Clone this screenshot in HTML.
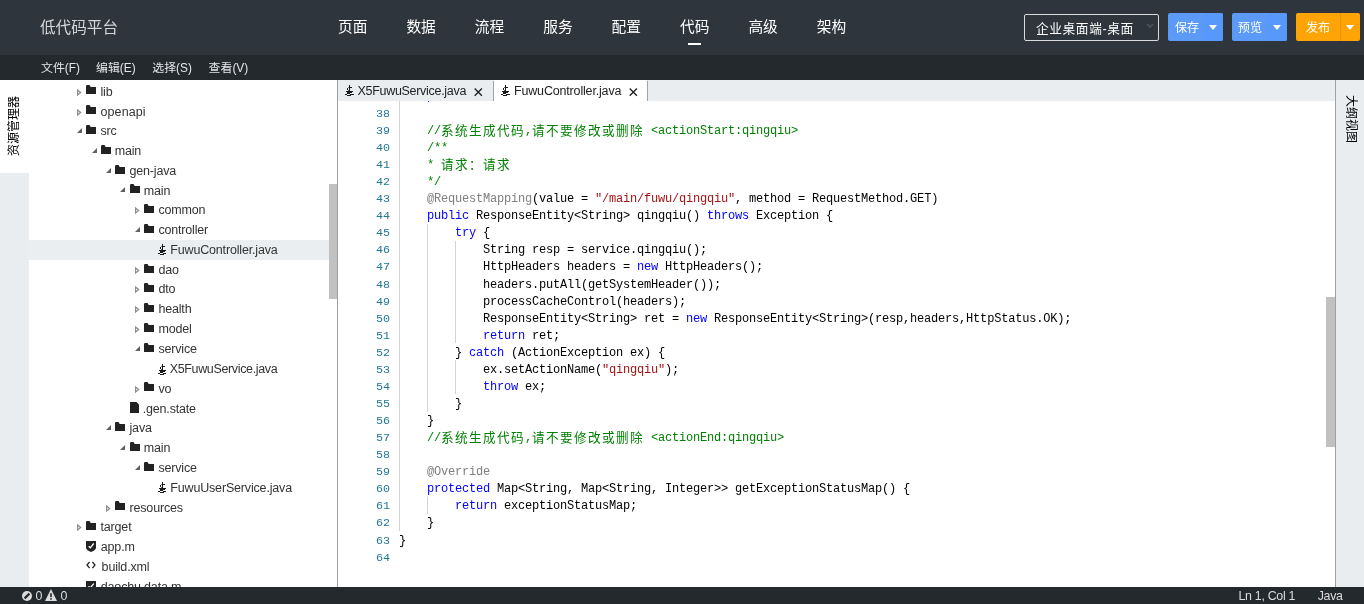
<!DOCTYPE html>
<html lang="zh-CN">
<head>
<meta charset="utf-8">
<title>低代码平台</title>
<style>
*{box-sizing:border-box;margin:0;padding:0}
html,body{width:1364px;height:604px;overflow:hidden;background:#fff}
body{position:relative;font-family:"Liberation Sans","Noto Sans CJK SC",sans-serif;font-size:12.6px;color:#333}
i{font-style:normal;display:block;position:absolute}
#top{position:absolute;left:0;top:0;width:1364px;height:55px;background:#2e353d}
#title{position:absolute;left:40px;top:17px;font-size:15.6px;line-height:22px;color:#d4d6d8;white-space:nowrap}
.nav{position:absolute;top:16px;font-size:14.7px;line-height:22px;color:#fff;white-space:nowrap}
#ul{position:absolute;left:688px;top:43px;width:13px;height:2px;background:#fff}
#sel{position:absolute;left:1024px;top:14px;width:135px;height:27px;border:1px solid #d8dadc;border-radius:2px}
#sel span{position:absolute;left:11px;top:4px;font-size:12.7px;letter-spacing:.6px;line-height:20px;color:#fff;white-space:nowrap}
#sel svg{position:absolute;left:120.5px;top:8px}
.btn{position:absolute;top:13px;height:28px;border-radius:2px;color:#fff;font-size:12.1px;line-height:28px;white-space:nowrap;overflow:hidden}
.btn span{position:absolute;left:7px;top:1px}
.btn b{position:absolute;top:12px;width:0;height:0;border-left:4.5px solid transparent;border-right:4.5px solid transparent;border-top:5px solid #fff}
.blue{background:#5b9bf7}
.orange{background:#ffa406}
.btn u{position:absolute;left:36px;top:0;width:19px;height:28px;background:#5699fa;text-decoration:none}
#menu{position:absolute;left:0;top:55px;width:1364px;height:25px;background:#24292e}
#menu span{position:absolute;top:4px;font-size:11.9px;line-height:18px;color:#e4e5e6;white-space:nowrap}
#lstrip{position:absolute;left:0;top:80px;width:29px;height:507px;background:#e9edf0}
#ltab{position:absolute;left:0;top:0;width:29px;height:93px;background:#fff}
.vt{position:absolute;white-space:nowrap;font-size:12px;line-height:14px;color:#000;transform-origin:50% 50%}
#vt1{left:14px;top:46px;transform:translate(-50%,-50%) rotate(-90deg)}
#vt2{left:15px;top:39.3px;transform:translate(-50%,-50%) rotate(90deg)}
#tree{position:absolute;left:29px;top:80px;width:308px;height:507px;background:#fff;overflow:hidden}
.row{position:absolute;left:0;width:300px;height:19.8px}
.selbg{position:absolute;left:0;top:160px;width:300px;height:19.8px;background:#ebeef1}
.lb{position:absolute;line-height:16px;font-size:12.5px;letter-spacing:-0.17px;color:#333;white-space:nowrap}
svg.ic,svg.ar{position:absolute;display:block}
#tsb{position:absolute;left:329px;top:184px;width:8px;height:115px;background:#c1c1c1}
#vline{position:absolute;left:337px;top:80px;width:1px;height:507px;background:#a0a0a0}
#tabs{position:absolute;left:338px;top:80px;width:997px;height:21px;background:#e9edf0}
.tab{position:absolute;top:0;height:21px;font-size:12.5px;letter-spacing:-0.3px;line-height:21px;color:#222;white-space:nowrap}
.tab span{position:absolute;top:1px}
#ed{position:absolute;left:338px;top:101px;width:997px;height:486px;background:#fff;overflow:hidden}
#code{position:absolute;left:0;top:0;width:997px;height:486px;font-family:"Liberation Mono","Noto Sans CJK SC",monospace;font-size:12px;letter-spacing:-0.2px}
.ln{position:absolute;left:0;height:17px;line-height:17px;white-space:pre;width:997px}
.no{position:absolute;top:0;left:0;width:52px;text-align:right;color:#237893;font-size:11.7px;letter-spacing:0}
.tx{position:absolute;top:0;left:61px;color:#000}
.z{font-size:12.6px;letter-spacing:1.4px;position:relative;top:1px}
.c{color:#008000}.k{color:#0000ff}.s{color:#a31515}.a{color:#808080}
.g{position:absolute;width:1px;background:#d3d3d3}
#esb{position:absolute;left:988px;top:196px;width:9px;height:150px;background:#c1c1c1}
#rline{position:absolute;left:1335px;top:80px;width:1px;height:507px;background:#a0a0a0}
#rstrip{position:absolute;left:1336px;top:80px;width:28px;height:507px;background:#e9edf0}
#status{position:absolute;left:0;top:587px;width:1364px;height:17px;background:#24292e;color:#dcdcdc;font-size:12.4px;letter-spacing:-0.3px;line-height:17px}
#status span{position:absolute;top:1px;white-space:nowrap}
#top,#menu,#lstrip,#tree,#tabs,#ed,#rstrip,#status{will-change:transform}
</style>
</head>
<body>
<div id="top">
<div id="title">低代码平台</div>
<div class="nav" style="left:338px">页面</div>
<div class="nav" style="left:406.4px">数据</div>
<div class="nav" style="left:474.8px">流程</div>
<div class="nav" style="left:543.2px">服务</div>
<div class="nav" style="left:611.6px">配置</div>
<div class="nav" style="left:680px">代码</div>
<div class="nav" style="left:748.4px">高级</div>
<div class="nav" style="left:816.8px">架构</div>
<div id="ul"></div>
<div id="sel"><span>企业桌面端-桌面</span><svg width="8" height="6" viewBox="0 0 8 6"><path d="M1 1 L4 4 L7 1" fill="none" stroke="#4c535b" stroke-width="1.6"/></svg></div>
<div class="btn blue" style="left:1168px;width:55px"><u></u><span style="left:7px">保存</span><b style="left:40.7px"></b></div>
<div class="btn blue" style="left:1232px;width:55px"><u></u><span style="left:5.8px">预览</span><b style="left:40.7px"></b></div>
<div class="btn orange" style="left:1296px;width:64px"><span style="left:10px">发布</span><i style="left:44px;top:0;width:1px;height:28px;background:#e8940a"></i><b style="left:50px"></b></div>
</div>
<div id="menu"><span style="left:41px">文件(F)</span><span style="left:96px">编辑(E)</span><span style="left:152.3px">选择(S)</span><span style="left:208.6px">查看(V)</span></div>
<div id="lstrip"><div id="ltab"></div><div class="vt" id="vt1">资源管理器</div></div>
<div id="tree"><div class="selbg"></div><svg class="ar" style="left:48.0px;top:1px;margin-top:8px" width="5" height="8" viewBox="0 0 5 8"><path d="M.6 1L3.7 3.5L.6 6Z" fill="#f0f0f0" stroke="#8e8e8e" stroke-width="1.2"/></svg><svg class="ic" style="left:57.0px;top:1px;margin-top:4px" width="10" height="9" viewBox="0 0 10 9"><path d="M0 1.2Q0 0 1.2 0H3Q4 0 4.3 1.2L4.6 2H10V9H0Z" fill="#222"/></svg><span class="lb" style="left:71.5px;top:4px">lib</span><svg class="ar" style="left:48.0px;top:21px;margin-top:8px" width="5" height="8" viewBox="0 0 5 8"><path d="M.6 1L3.7 3.5L.6 6Z" fill="#f0f0f0" stroke="#8e8e8e" stroke-width="1.2"/></svg><svg class="ic" style="left:57.0px;top:21px;margin-top:4px" width="10" height="9" viewBox="0 0 10 9"><path d="M0 1.2Q0 0 1.2 0H3Q4 0 4.3 1.2L4.6 2H10V9H0Z" fill="#222"/></svg><span class="lb" style="left:71.5px;top:24px;letter-spacing:0.1px">openapi</span><svg class="ar" style="left:48.0px;top:41px;margin-top:6.8px" width="5" height="5" viewBox="0 0 5 5"><path d="M5 0V5H0Z" fill="#606060"/></svg><svg class="ic" style="left:57.0px;top:41px;margin-top:4px" width="10" height="9" viewBox="0 0 10 9"><path d="M0 1.2Q0 0 1.2 0H3Q4 0 4.3 1.2L4.6 2H10V9H0Z" fill="#222"/></svg><span class="lb" style="left:71.5px;top:43px">src</span><svg class="ar" style="left:63.0px;top:61px;margin-top:6.8px" width="5" height="5" viewBox="0 0 5 5"><path d="M5 0V5H0Z" fill="#606060"/></svg><svg class="ic" style="left:72.0px;top:61px;margin-top:4px" width="10" height="9" viewBox="0 0 10 9"><path d="M0 1.2Q0 0 1.2 0H3Q4 0 4.3 1.2L4.6 2H10V9H0Z" fill="#222"/></svg><span class="lb" style="left:85.7px;top:63px">main</span><svg class="ar" style="left:76.8px;top:81px;margin-top:6.8px" width="5" height="5" viewBox="0 0 5 5"><path d="M5 0V5H0Z" fill="#606060"/></svg><svg class="ic" style="left:85.9px;top:81px;margin-top:4px" width="10" height="9" viewBox="0 0 10 9"><path d="M0 1.2Q0 0 1.2 0H3Q4 0 4.3 1.2L4.6 2H10V9H0Z" fill="#222"/></svg><span class="lb" style="left:100.5px;top:83px">gen-java</span><svg class="ar" style="left:91.3px;top:100px;margin-top:6.8px" width="5" height="5" viewBox="0 0 5 5"><path d="M5 0V5H0Z" fill="#606060"/></svg><svg class="ic" style="left:100.9px;top:100px;margin-top:4px" width="10" height="9" viewBox="0 0 10 9"><path d="M0 1.2Q0 0 1.2 0H3Q4 0 4.3 1.2L4.6 2H10V9H0Z" fill="#222"/></svg><span class="lb" style="left:114.8px;top:103px">main</span><svg class="ar" style="left:105.7px;top:119px;margin-top:8px" width="5" height="8" viewBox="0 0 5 8"><path d="M.6 1L3.7 3.5L.6 6Z" fill="#f0f0f0" stroke="#8e8e8e" stroke-width="1.2"/></svg><svg class="ic" style="left:114.9px;top:120px;margin-top:4px" width="10" height="9" viewBox="0 0 10 9"><path d="M0 1.2Q0 0 1.2 0H3Q4 0 4.3 1.2L4.6 2H10V9H0Z" fill="#222"/></svg><span class="lb" style="left:129.4px;top:122px">common</span><svg class="ar" style="left:105.7px;top:140px;margin-top:6.8px" width="5" height="5" viewBox="0 0 5 5"><path d="M5 0V5H0Z" fill="#606060"/></svg><svg class="ic" style="left:114.9px;top:140px;margin-top:4px" width="10" height="9" viewBox="0 0 10 9"><path d="M0 1.2Q0 0 1.2 0H3Q4 0 4.3 1.2L4.6 2H10V9H0Z" fill="#222"/></svg><span class="lb" style="left:129.4px;top:142px">controller</span><svg class="ic" style="left:129.2px;top:160px;margin-top:4px" width="9" height="11" viewBox="0 0 9 11" shape-rendering="crispEdges"><g fill="#1a1a1a"><rect x="4" y="0" width="1" height="6"/><rect x="5" y="2" width="2" height="1"/><rect x="3" y="2" width="1" height="1" opacity=".6"/><rect x="2" y="3" width="1" height="2"/><rect x="3" y="5" width="1" height="1" opacity=".7"/><rect x="1" y="6" width="7" height="1"/><rect x="2" y="7" width="5" height="1"/><rect x="2" y="8" width="3" height="1"/><rect x="0" y="9" width="2" height="1"/><rect x="5" y="9" width="3" height="1"/><rect x="2" y="10" width="4" height="1"/></g></svg><span class="lb" style="left:141.3px;top:162px">FuwuController.java</span><svg class="ar" style="left:105.7px;top:179px;margin-top:8px" width="5" height="8" viewBox="0 0 5 8"><path d="M.6 1L3.7 3.5L.6 6Z" fill="#f0f0f0" stroke="#8e8e8e" stroke-width="1.2"/></svg><svg class="ic" style="left:114.9px;top:180px;margin-top:4px" width="10" height="9" viewBox="0 0 10 9"><path d="M0 1.2Q0 0 1.2 0H3Q4 0 4.3 1.2L4.6 2H10V9H0Z" fill="#222"/></svg><span class="lb" style="left:129.4px;top:182px">dao</span><svg class="ar" style="left:105.7px;top:198px;margin-top:8px" width="5" height="8" viewBox="0 0 5 8"><path d="M.6 1L3.7 3.5L.6 6Z" fill="#f0f0f0" stroke="#8e8e8e" stroke-width="1.2"/></svg><svg class="ic" style="left:114.9px;top:199px;margin-top:4px" width="10" height="9" viewBox="0 0 10 9"><path d="M0 1.2Q0 0 1.2 0H3Q4 0 4.3 1.2L4.6 2H10V9H0Z" fill="#222"/></svg><span class="lb" style="left:129.4px;top:201px">dto</span><svg class="ar" style="left:105.7px;top:218px;margin-top:8px" width="5" height="8" viewBox="0 0 5 8"><path d="M.6 1L3.7 3.5L.6 6Z" fill="#f0f0f0" stroke="#8e8e8e" stroke-width="1.2"/></svg><svg class="ic" style="left:114.9px;top:219px;margin-top:4px" width="10" height="9" viewBox="0 0 10 9"><path d="M0 1.2Q0 0 1.2 0H3Q4 0 4.3 1.2L4.6 2H10V9H0Z" fill="#222"/></svg><span class="lb" style="left:129.4px;top:221px">health</span><svg class="ar" style="left:105.7px;top:238px;margin-top:8px" width="5" height="8" viewBox="0 0 5 8"><path d="M.6 1L3.7 3.5L.6 6Z" fill="#f0f0f0" stroke="#8e8e8e" stroke-width="1.2"/></svg><svg class="ic" style="left:114.9px;top:239px;margin-top:4px" width="10" height="9" viewBox="0 0 10 9"><path d="M0 1.2Q0 0 1.2 0H3Q4 0 4.3 1.2L4.6 2H10V9H0Z" fill="#222"/></svg><span class="lb" style="left:129.4px;top:241px">model</span><svg class="ar" style="left:105.7px;top:259px;margin-top:6.8px" width="5" height="5" viewBox="0 0 5 5"><path d="M5 0V5H0Z" fill="#606060"/></svg><svg class="ic" style="left:114.9px;top:259px;margin-top:4px" width="10" height="9" viewBox="0 0 10 9"><path d="M0 1.2Q0 0 1.2 0H3Q4 0 4.3 1.2L4.6 2H10V9H0Z" fill="#222"/></svg><span class="lb" style="left:129.4px;top:261px">service</span><svg class="ic" style="left:129.2px;top:280px;margin-top:4px" width="9" height="11" viewBox="0 0 9 11" shape-rendering="crispEdges"><g fill="#1a1a1a"><rect x="4" y="0" width="1" height="6"/><rect x="5" y="2" width="2" height="1"/><rect x="3" y="2" width="1" height="1" opacity=".6"/><rect x="2" y="3" width="1" height="2"/><rect x="3" y="5" width="1" height="1" opacity=".7"/><rect x="1" y="6" width="7" height="1"/><rect x="2" y="7" width="5" height="1"/><rect x="2" y="8" width="3" height="1"/><rect x="0" y="9" width="2" height="1"/><rect x="5" y="9" width="3" height="1"/><rect x="2" y="10" width="4" height="1"/></g></svg><span class="lb" style="left:140.7px;top:281px;letter-spacing:-0.35px">X5FuwuService.java</span><svg class="ar" style="left:105.7px;top:298px;margin-top:8px" width="5" height="8" viewBox="0 0 5 8"><path d="M.6 1L3.7 3.5L.6 6Z" fill="#f0f0f0" stroke="#8e8e8e" stroke-width="1.2"/></svg><svg class="ic" style="left:114.9px;top:298px;margin-top:4px" width="10" height="9" viewBox="0 0 10 9"><path d="M0 1.2Q0 0 1.2 0H3Q4 0 4.3 1.2L4.6 2H10V9H0Z" fill="#222"/></svg><span class="lb" style="left:129.4px;top:301px">vo</span><svg class="ic" style="left:100.9px;top:318px;margin-top:4px" width="9" height="11" viewBox="0 0 9 11"><path d="M0 0H6.5L9 2.5V11H0Z" fill="#222"/></svg><span class="lb" style="left:113.7px;top:321px">.gen.state</span><svg class="ar" style="left:76.8px;top:338px;margin-top:6.8px" width="5" height="5" viewBox="0 0 5 5"><path d="M5 0V5H0Z" fill="#606060"/></svg><svg class="ic" style="left:85.9px;top:338px;margin-top:4px" width="10" height="9" viewBox="0 0 10 9"><path d="M0 1.2Q0 0 1.2 0H3Q4 0 4.3 1.2L4.6 2H10V9H0Z" fill="#222"/></svg><span class="lb" style="left:100.5px;top:340px">java</span><svg class="ar" style="left:91.3px;top:358px;margin-top:6.8px" width="5" height="5" viewBox="0 0 5 5"><path d="M5 0V5H0Z" fill="#606060"/></svg><svg class="ic" style="left:100.9px;top:358px;margin-top:4px" width="10" height="9" viewBox="0 0 10 9"><path d="M0 1.2Q0 0 1.2 0H3Q4 0 4.3 1.2L4.6 2H10V9H0Z" fill="#222"/></svg><span class="lb" style="left:114.8px;top:360px">main</span><svg class="ar" style="left:105.7px;top:378px;margin-top:6.8px" width="5" height="5" viewBox="0 0 5 5"><path d="M5 0V5H0Z" fill="#606060"/></svg><svg class="ic" style="left:114.9px;top:378px;margin-top:4px" width="10" height="9" viewBox="0 0 10 9"><path d="M0 1.2Q0 0 1.2 0H3Q4 0 4.3 1.2L4.6 2H10V9H0Z" fill="#222"/></svg><span class="lb" style="left:129.4px;top:380px">service</span><svg class="ic" style="left:129.2px;top:398px;margin-top:4px" width="9" height="11" viewBox="0 0 9 11" shape-rendering="crispEdges"><g fill="#1a1a1a"><rect x="4" y="0" width="1" height="6"/><rect x="5" y="2" width="2" height="1"/><rect x="3" y="2" width="1" height="1" opacity=".6"/><rect x="2" y="3" width="1" height="2"/><rect x="3" y="5" width="1" height="1" opacity=".7"/><rect x="1" y="6" width="7" height="1"/><rect x="2" y="7" width="5" height="1"/><rect x="2" y="8" width="3" height="1"/><rect x="0" y="9" width="2" height="1"/><rect x="5" y="9" width="3" height="1"/><rect x="2" y="10" width="4" height="1"/></g></svg><span class="lb" style="left:141.3px;top:400px">FuwuUserService.java</span><svg class="ar" style="left:76.8px;top:417px;margin-top:8px" width="5" height="8" viewBox="0 0 5 8"><path d="M.6 1L3.7 3.5L.6 6Z" fill="#f0f0f0" stroke="#8e8e8e" stroke-width="1.2"/></svg><svg class="ic" style="left:85.9px;top:417px;margin-top:4px" width="10" height="9" viewBox="0 0 10 9"><path d="M0 1.2Q0 0 1.2 0H3Q4 0 4.3 1.2L4.6 2H10V9H0Z" fill="#222"/></svg><span class="lb" style="left:100.5px;top:420px">resources</span><svg class="ar" style="left:48.0px;top:436px;margin-top:8px" width="5" height="8" viewBox="0 0 5 8"><path d="M.6 1L3.7 3.5L.6 6Z" fill="#f0f0f0" stroke="#8e8e8e" stroke-width="1.2"/></svg><svg class="ic" style="left:57.0px;top:437px;margin-top:4px" width="10" height="9" viewBox="0 0 10 9"><path d="M0 1.2Q0 0 1.2 0H3Q4 0 4.3 1.2L4.6 2H10V9H0Z" fill="#222"/></svg><span class="lb" style="left:71.5px;top:439px">target</span><svg class="ic" style="left:57.0px;top:457px;margin-top:4px" width="10" height="11" viewBox="0 0 10 11"><path d="M0 0H10V6.5Q10 9 5 11Q0 9 0 6.5Z" fill="#222"/><path d="M2.7 5.3L4.3 6.8L7.7 2.5" fill="none" stroke="#fff" stroke-width="1.25"/></svg><span class="lb" style="left:71.8px;top:459px">app.m</span><svg class="ic" style="left:57.0px;top:477px;margin-top:4.2px" width="10" height="8" viewBox="0 0 10 8"><path d="M3.6 .8L1 4L3.6 7.2M6.4 .8L9 4L6.4 7.2" fill="none" stroke="#222" stroke-width="1.3"/></svg><span class="lb" style="left:72.6px;top:479px">build.xml</span><svg class="ic" style="left:57.0px;top:496px;margin-top:5px" width="10" height="10" viewBox="0 0 10 10"><rect width="10" height="10" fill="#222"/><path d="M2.5 5.2L4.2 6.9L7.8 2.6" fill="none" stroke="#fff" stroke-width="1.25"/></svg><span class="lb" style="left:71.8px;top:499px">daochu.data.m</span></div><div id="tsb"></div>
<div id="vline"></div>
<div id="tabs">
<div class="tab" style="left:0;width:155px"><svg style="position:absolute;left:7px;top:5px" width="9" height="11" viewBox="0 0 9 11" shape-rendering="crispEdges"><g fill="#1a1a1a"><rect x="4" y="0" width="1" height="6"/><rect x="5" y="2" width="2" height="1"/><rect x="3" y="2" width="1" height="1" opacity=".6"/><rect x="2" y="3" width="1" height="2"/><rect x="3" y="5" width="1" height="1" opacity=".7"/><rect x="1" y="6" width="7" height="1"/><rect x="2" y="7" width="5" height="1"/><rect x="2" y="8" width="3" height="1"/><rect x="0" y="9" width="2" height="1"/><rect x="5" y="9" width="4" height="1"/><rect x="2" y="10" width="4" height="1"/></g></svg><span style="left:19.5px">X5FuwuService.java</span><svg style="position:absolute;left:136px;top:8px" width="9" height="9" viewBox="0 0 9 9"><path d="M.7 .5L7.9 7.7M7.9 .5L.7 7.7" stroke="#222" stroke-width="1.35" fill="none"/></svg></div>
<div class="tab" style="left:156px;width:153px;background:#fff"><svg style="position:absolute;left:7px;top:5px" width="9" height="11" viewBox="0 0 9 11" shape-rendering="crispEdges"><g fill="#1a1a1a"><rect x="4" y="0" width="1" height="6"/><rect x="5" y="2" width="2" height="1"/><rect x="3" y="2" width="1" height="1" opacity=".6"/><rect x="2" y="3" width="1" height="2"/><rect x="3" y="5" width="1" height="1" opacity=".7"/><rect x="1" y="6" width="7" height="1"/><rect x="2" y="7" width="5" height="1"/><rect x="2" y="8" width="3" height="1"/><rect x="0" y="9" width="2" height="1"/><rect x="5" y="9" width="4" height="1"/><rect x="2" y="10" width="4" height="1"/></g></svg><span style="left:20px;letter-spacing:-0.17px">FuwuController.java</span><svg style="position:absolute;left:135px;top:8px" width="9" height="9" viewBox="0 0 9 9"><path d="M.7 .5L7.9 7.7M7.9 .5L.7 7.7" stroke="#222" stroke-width="1.35" fill="none"/></svg></div>
<i style="left:155px;top:1px;width:1px;height:20px;background:#a4a4a4"></i>
<i style="left:309px;top:1px;width:1px;height:20px;background:#a4a4a4"></i>
</div>
<div id="ed">
<div id="code"><div class="ln" style="top:5px"><span class="no">38</span><span class="tx"></span></div><div class="ln" style="top:22px"><span class="no">39</span><span class="tx">    <span class="c">//<span class="z">系统生成代码</span>,<span class="z">请不要修改或删除</span> &lt;actionStart:qingqiu&gt;</span></span></div><div class="ln" style="top:39px"><span class="no">40</span><span class="tx">    <span class="c">/**</span></span></div><div class="ln" style="top:56px"><span class="no">41</span><span class="tx">    <span class="c">* <span class="z">请求：请求</span></span></span></div><div class="ln" style="top:73px"><span class="no">42</span><span class="tx">    <span class="c">*/</span></span></div><div class="ln" style="top:90px"><span class="no">43</span><span class="tx">    <span class="a">@RequestMapping</span>(value = <span class="s">"/main/fuwu/qingqiu"</span>, method = RequestMethod.GET)</span></div><div class="ln" style="top:107px"><span class="no">44</span><span class="tx">    <span class="k">public</span> ResponseEntity&lt;String&gt; qingqiu() <span class="k">throws</span> Exception {</span></div><div class="ln" style="top:124px"><span class="no">45</span><span class="tx">        <span class="k">try</span> {</span></div><div class="ln" style="top:141px"><span class="no">46</span><span class="tx">            String resp = service.qingqiu();</span></div><div class="ln" style="top:158px"><span class="no">47</span><span class="tx">            HttpHeaders headers = <span class="k">new</span> HttpHeaders();</span></div><div class="ln" style="top:176px"><span class="no">48</span><span class="tx">            headers.putAll(getSystemHeader());</span></div><div class="ln" style="top:193px"><span class="no">49</span><span class="tx">            processCacheControl(headers);</span></div><div class="ln" style="top:210px"><span class="no">50</span><span class="tx">            ResponseEntity&lt;String&gt; ret = <span class="k">new</span> ResponseEntity&lt;String&gt;(resp,headers,HttpStatus.OK);</span></div><div class="ln" style="top:227px"><span class="no">51</span><span class="tx">            <span class="k">return</span> ret;</span></div><div class="ln" style="top:244px"><span class="no">52</span><span class="tx">        } <span class="k">catch</span> (ActionException ex) {</span></div><div class="ln" style="top:261px"><span class="no">53</span><span class="tx">            ex.setActionName(<span class="s">"qingqiu"</span>);</span></div><div class="ln" style="top:278px"><span class="no">54</span><span class="tx">            <span class="k">throw</span> ex;</span></div><div class="ln" style="top:295px"><span class="no">55</span><span class="tx">        }</span></div><div class="ln" style="top:312px"><span class="no">56</span><span class="tx">    }</span></div><div class="ln" style="top:329px"><span class="no">57</span><span class="tx">    <span class="c">//<span class="z">系统生成代码</span>,<span class="z">请不要修改或删除</span> &lt;actionEnd:qingqiu&gt;</span></span></div><div class="ln" style="top:346px"><span class="no">58</span><span class="tx"></span></div><div class="ln" style="top:363px"><span class="no">59</span><span class="tx">    <span class="a">@Override</span></span></div><div class="ln" style="top:380px"><span class="no">60</span><span class="tx">    <span class="k">protected</span> Map&lt;String, Map&lt;String, Integer&gt;&gt; getExceptionStatusMap() {</span></div><div class="ln" style="top:397px"><span class="no">61</span><span class="tx">        <span class="k">return</span> exceptionStatusMap;</span></div><div class="ln" style="top:414px"><span class="no">62</span><span class="tx">    }</span></div><div class="ln" style="top:432px"><span class="no">63</span><span class="tx">}</span></div><div class="ln" style="top:449px"><span class="no">64</span><span class="tx"></span></div><i class="g" style="left:61px;top:0.0px;height:430.0px"></i><i class="g" style="left:89px;top:122.8px;height:187.8px"></i><i class="g" style="left:117px;top:139.9px;height:102.4px"></i><i class="g" style="left:117px;top:259.4px;height:34.1px"></i><i class="g" style="left:89px;top:395.9px;height:17.1px"></i><i style="left:90px;top:0;width:1px;height:1px;background:#33f"></i></div><!--endcode--><div id="esb"></div>
</div>
<div id="rline"></div>
<div id="rstrip"><div class="vt" id="vt2">大纲视图</div></div>
<div id="status"><svg style="position:absolute;left:22px;top:4px" width="10" height="10" viewBox="0 0 10 10"><circle cx="5" cy="5" r="5" fill="#dcdcdc"/><path d="M2.6 7.4L7.4 2.6" stroke="#24292e" stroke-width="2.2"/></svg><svg style="position:absolute;left:45px;top:2px" width="12" height="12" viewBox="0 0 12 12"><path d="M6 0L12 12H0Z" fill="#dcdcdc"/><rect x="5.2" y="4.2" width="1.6" height="4" fill="#23282e"/><rect x="5.2" y="9.2" width="1.6" height="1.5" fill="#23282e"/></svg><span style="left:35.5px">0</span><span style="left:60.5px">0</span><span style="left:1238.5px">Ln 1, Col 1</span><span style="left:1317.7px">Java</span></div>
</body>
</html>
